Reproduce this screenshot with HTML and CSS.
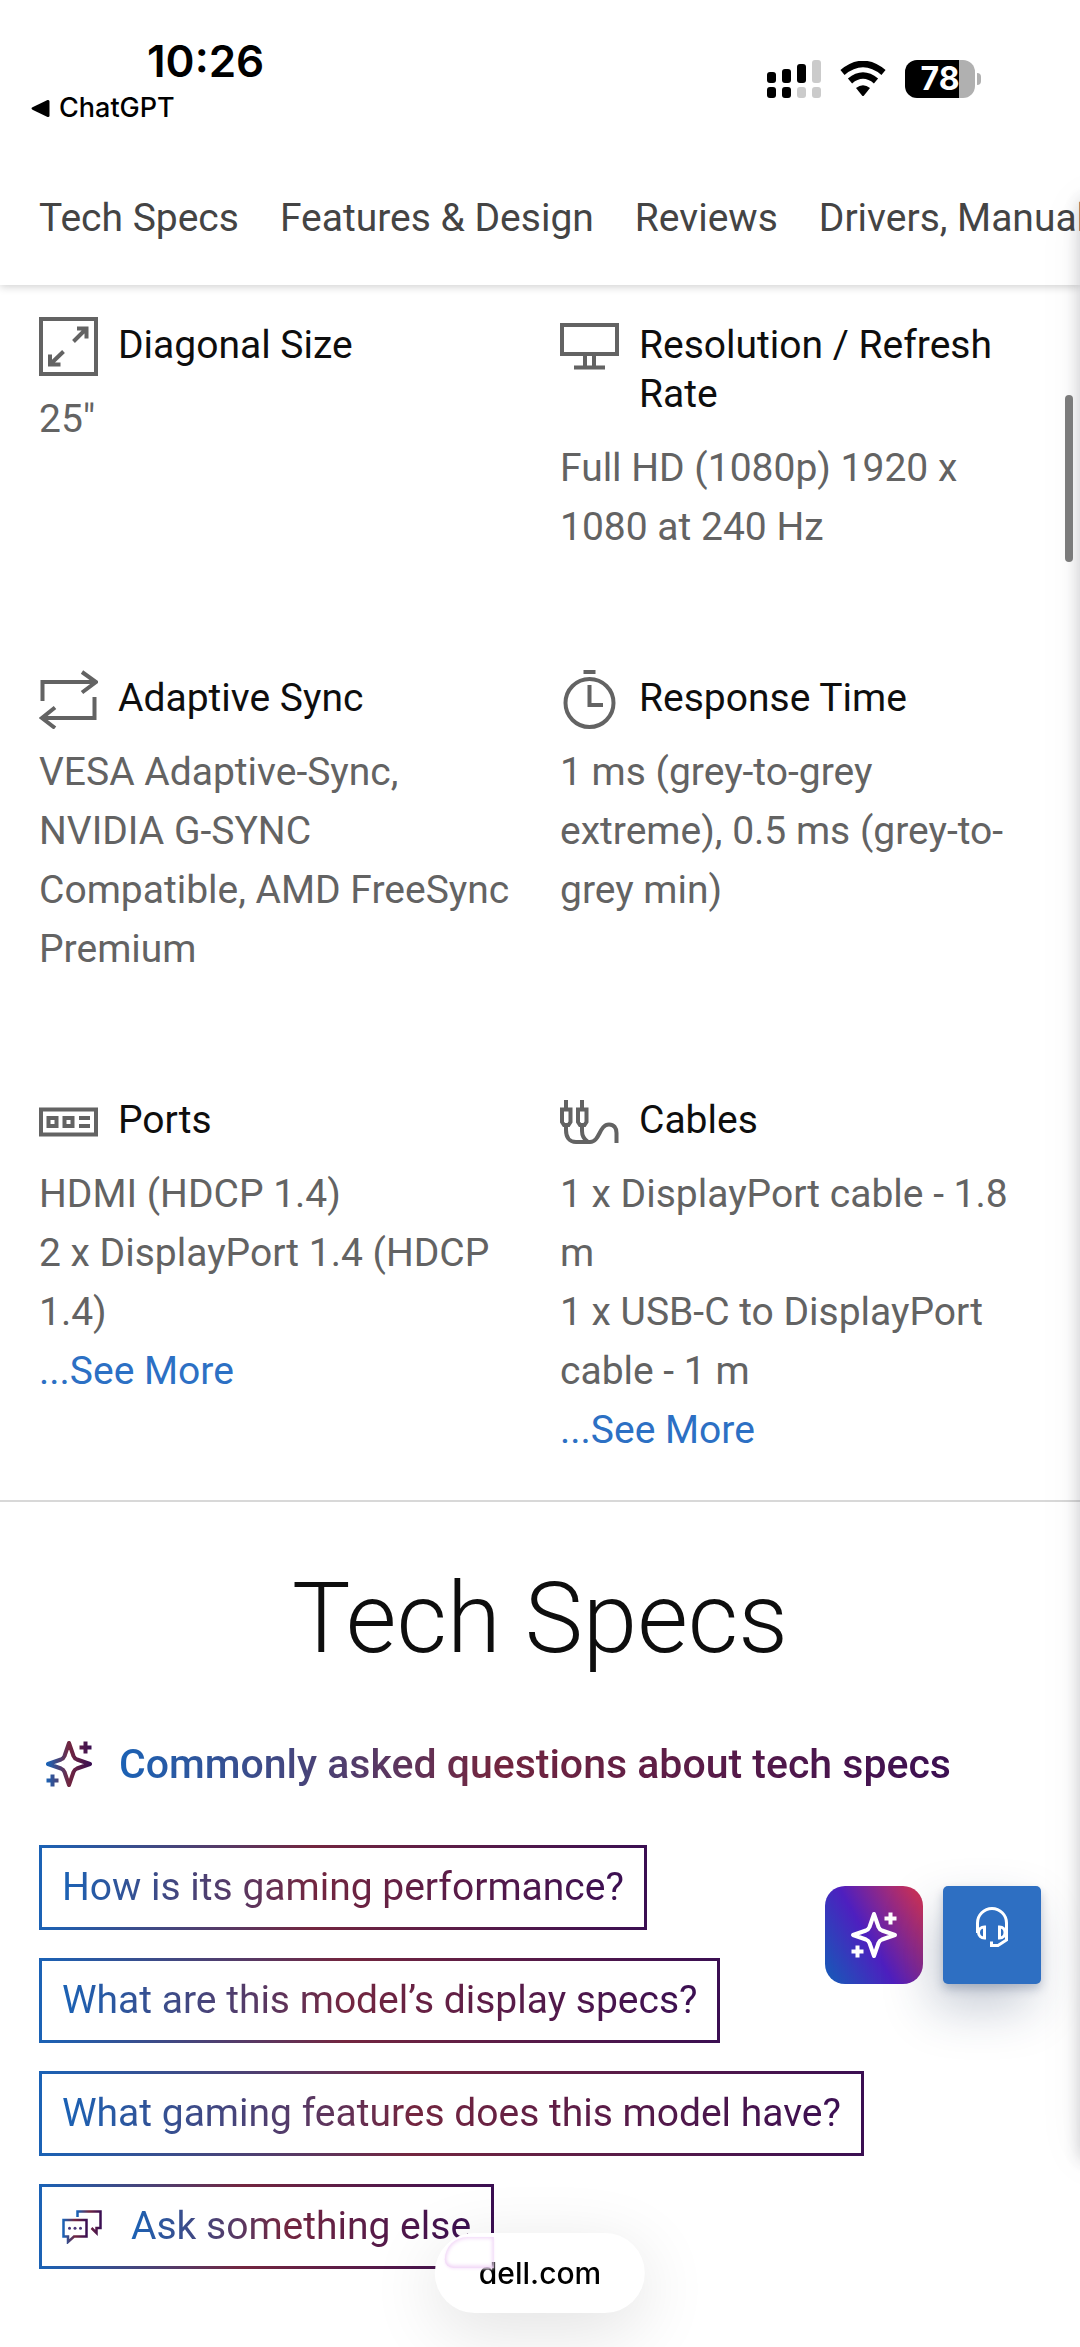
FILE: index.html
```html
<!DOCTYPE html>
<html lang="en">
<head>
    <meta charset="UTF-8">
    <meta name="viewport" content="width=device-width, initial-scale=1.0">
    <title>Tech Specs</title>
    <link rel="stylesheet" href="styles.css">
</head>
<body>
    <svg class="defs" aria-hidden="true">
        <defs>
            <linearGradient id="aiGradient" x1="0" y1="0" x2="1" y2="0">
                <stop offset="0" stop-color="#1b62b5"/>
                <stop offset="0.5" stop-color="#73263f"/>
                <stop offset="1" stop-color="#3b0f52"/>
            </linearGradient>
            <symbol id="sparkle" viewBox="0 0 60 60">
                <path d="M30 9L34.5 22Q35.5 24.500 38 25.500L51 30L38 34.500Q35.500 35.500 34.500 38L30 51L25.500 38Q24.500 35.500 22 34.500L9 30L22 25.500Q24.500 24.500 25.500 22Z"/>
                <path d="M46.500 7.500v12M40.500 13.500h12M13.500 40.500v12M7.500 46.500h12"/>
            </symbol>
        </defs>
    </svg>

    <header class="status-bar">
        <div class="status-left">
            <time class="clock">10:26</time>
            <a href="#" class="back-link">
                <svg width="19" height="19" viewBox="0 0 19 19"><path d="M1.500 8.300L16.500 1Q18.500 0.500 18.500 2.500V16.500Q18.500 18.500 16.500 18L1.500 10.700Q-0.500 9.500 1.500 8.300Z"/></svg>
                ChatGPT
            </a>
        </div>
        <div class="status-right">
            <svg width="54" height="38" viewBox="0 0 54 38">
                <rect x="0" y="12" width="9" height="11" rx="3"/>
                <rect x="15" y="9" width="9" height="14" rx="3"/>
                <rect x="30" y="4" width="9" height="19" rx="3"/>
                <rect x="45" y="0" width="9" height="23" rx="3" fill="#cbcbcb"/>
                <rect x="0" y="27" width="9" height="11" rx="3"/>
                <rect x="15" y="27" width="9" height="11" rx="3"/>
                <rect x="30" y="27" width="9" height="11" rx="3" fill="#cbcbcb"/>
                <rect x="45" y="27" width="9" height="11" rx="3" fill="#cbcbcb"/>
            </svg>
            <svg class="wifi" width="48" height="36" viewBox="0 0 48 36">
                <path d="M3.500 11.500Q24 -5.500 44.500 11.500" fill="none" stroke="#000" stroke-width="6.500"/>
                <path d="M11 20Q24 9 37 20" fill="none" stroke="#000" stroke-width="6.500"/>
                <path d="M17 27Q24 21.500 31 27L25 34.500Q24 35.500 23 34.500Z"/>
            </svg>
            <div class="battery">
                <span class="battery-level">78</span>
                <span class="battery-cap"></span>
            </div>
        </div>
    </header>

    <nav class="page-nav">
        <a href="#">Tech Specs</a>
        <a href="#">Features &amp; Design</a>
        <a href="#">Reviews</a>
        <a href="#">Drivers, Manuals &amp; Support</a>
    </nav>

    <main>
        <section class="spec-grid">
            <article>
                <h3>
                    <svg class="spec-icon" viewBox="0 0 59 59">
                        <rect x="2" y="2" width="55" height="55"/>
                        <path d="M38 11.500H47.500V21.500M47 12L34.500 24.500M11 37.500V47.500H21.500M11.500 47L24.500 34.500"/>
                    </svg>
                    Diagonal Size
                </h3>
                <p>25"</p>
            </article>
            <article>
                <h3>
                    <svg class="spec-icon" viewBox="0 0 59 59">
                        <rect x="2" y="8" width="55" height="29"/>
                        <path d="M25 38V50M34 38V50M14 50.500H45"/>
                    </svg>
                    Resolution / Refresh Rate
                </h3>
                <p>Full HD (1080p) 1920 x 1080 at 240 Hz</p>
            </article>
            <article>
                <h3>
                    <svg class="spec-icon" viewBox="0 0 59 59">
                        <path d="M3.500 31V12H57M43 2L57 12L43 22.500M55.500 27V48H3M16 37.500L3 48L16 58"/>
                    </svg>
                    Adaptive Sync
                </h3>
                <p>VESA Adaptive-Sync, NVIDIA G-SYNC Compatible, AMD FreeSync Premium</p>
            </article>
            <article>
                <h3>
                    <svg class="spec-icon" viewBox="0 0 59 59">
                        <circle cx="29.500" cy="33" r="24"/>
                        <path d="M23.500 2H35.500M29.500 15V35H43"/>
                    </svg>
                    Response Time
                </h3>
                <p>1 ms (grey-to-grey extreme), 0.5 ms (grey-to-grey min)</p>
            </article>
            <article>
                <h3>
                    <svg class="spec-icon" viewBox="0 0 59 59">
                        <rect x="2" y="17.500" width="55" height="25"/>
                        <rect x="9.500" y="26" width="8" height="8"/>
                        <rect x="25.500" y="26" width="8" height="8"/>
                        <path d="M40 26H51M40 34H51"/>
                    </svg>
                    Ports
                </h3>
                <p>HDMI (HDCP 1.4)<br>2 x DisplayPort 1.4 (HDCP 1.4)</p>
                <a href="#">...See More</a>
            </article>
            <article>
                <h3>
                    <svg class="spec-icon" viewBox="0 0 59 59">
                        <path d="M6 8V16M22 8V16M2 17.500H10.500V30L8.500 33H4L2 30ZM18 17.500H26.500V30L24.500 33H20L18 30Z"/>
                        <path d="M6 33V38C6 45 9 50 16 50H30C40 50 39 32.500 49 32.500C54 32.500 56.500 36 56.500 41V51M22 33V39Q22 46 28 50"/>
                    </svg>
                    Cables
                </h3>
                <p>1 x DisplayPort cable - 1.8 m<br>1 x USB-C to DisplayPort cable - 1 m</p>
                <a href="#">...See More</a>
            </article>
        </section>

        <section class="tech-specs">
            <h1>Tech Specs</h1>
            <h2>
                <svg class="ai-icon" stroke="url(#aiGradient)"><use href="#sparkle"/></svg>
                <span class="ai-text">Commonly asked questions about tech specs</span>
            </h2>
            <div class="questions">
                <button type="button"><span class="ai-text">How is its gaming performance?</span></button>
                <button type="button"><span class="ai-text">What are this model’s display specs?</span></button>
                <button type="button"><span class="ai-text">What gaming features does this model have?</span></button>
                <button type="button">
                    <svg class="ask-icon" viewBox="0 0 41 34">
                        <g fill="none" stroke="url(#aiGradient)" stroke-width="2.500">
                            <path d="M15.500 7V1.500H38.500V18H34.500V23L29.500 18"/>
                            <path d="M1.500 10H24.500V26.500H12L6 32V26.500H1.500Z"/>
                        </g>
                        <g fill="#4a3678">
                            <circle cx="7.500" cy="18.300" r="1.500"/>
                            <circle cx="13" cy="18.300" r="1.500"/>
                            <circle cx="18.500" cy="18.300" r="1.500"/>
                        </g>
                    </svg>
                    <span class="ai-text">Ask something else</span>
                </button>
            </div>
        </section>
    </main>

    <div class="floating-buttons">
        <button type="button" class="ai-button" aria-label="AI assistant">
            <svg class="ai-icon"><use href="#sparkle"/></svg>
        </button>
        <button type="button" class="support-button" aria-label="Support">
            <svg width="32" height="41" viewBox="0 0 32 41">
                <path d="M1.500 26V16A14.500 14.500 0 0 1 30.500 16V33L22 38.500H15.500V34.500"/>
                <path d="M8.500 20V31C5 31 2.500 28.500 2.500 25.500S5 20 8.500 20ZM23.500 20V31C27 31 29 28.500 29 25.500S27 20 23.500 20Z"/>
            </svg>
        </button>
    </div>

    <div class="drawer-edge"></div>
    <div class="scroll-thumb"></div>

    <a href="#" class="address-pill">dell.com</a>
</body>
</html>
```
FILE: styles.css
```css
* {
    box-sizing: border-box;
    margin: 0;
    padding: 0;
}

body {
    background-color: #fff;
    font-family: Roboto, sans-serif;
    font-size: 39px;
    line-height: 59px;
    color: #636363;
}

a {
    color: #2c70c4;
    text-decoration: none;
}

button {
    font: inherit;
    cursor: pointer;
}

.defs {
    position: absolute;
    width: 0;
    height: 0;
}

/* Status bar */
.status-bar {
    display: flex;
    justify-content: space-between;
    align-items: center;
    padding: 34px 99px 0 31px;
    margin-bottom: 24px;
    font-family: Inter, sans-serif;
    color: #000;
}

.clock {
    display: block;
    margin-left: 116px;
    font-size: 44px;
    font-weight: 600;
    line-height: 54px;
}

.back-link {
    display: flex;
    align-items: center;
    gap: 9px;
    font-size: 27px;
    font-weight: 500;
    line-height: 40px;
    color: #000;
}

.status-right {
    display: flex;
    align-items: center;
    gap: 18px;
    padding-bottom: 4px;
}

.battery {
    position: relative;
    display: flex;
    justify-content: center;
    align-items: center;
    width: 70px;
    height: 38px;
    margin-right: 6px;
    border-radius: 12px;
    background: linear-gradient(to right, #000 54px, #b0b0b0 54px);
}

.battery-level {
    font-size: 32px;
    font-weight: 700;
    line-height: 38px;
    color: #fff;
}

.battery-cap {
    position: absolute;
    top: 13px;
    right: -6px;
    width: 4px;
    height: 12px;
    border-radius: 0 6px 6px 0;
    background-color: #b0b0b0;
}

/* Section links */
.page-nav {
    display: flex;
    gap: 41px;
    padding: 42px 39px;
    line-height: 49px;
    white-space: nowrap;
    overflow-x: auto;
    scrollbar-width: none;
    box-shadow: 0 2px 8px rgba(0, 0, 0, 0.18);
    /* shadow only below the bar */
    clip-path: inset(0 0 -16px);
}

.page-nav a {
    flex: none;
    color: #444;
}

/* Key specs */
.spec-grid {
    display: grid;
    grid-template-columns: 1fr 1fr;
    gap: 117px 40px;
    padding: 36px 39px 40px;
    border-bottom: 2px solid #d8d8d8;
}

.spec-grid h3 {
    display: flex;
    align-items: flex-start;
    gap: 20px;
    margin-bottom: 20px;
    font-size: 39px;
    font-weight: 400;
    line-height: 49px;
    color: #0e0e0e;
}

.spec-icon {
    flex: none;
    width: 59px;
    height: 59px;
    margin: -4px 0 -6px;
    fill: none;
    stroke: #636363;
    stroke-width: 4;
}

/* Tech specs and suggested questions */
.tech-specs {
    padding: 58px 39px 78px;
}

h1 {
    margin-bottom: 56px;
    font-size: 98px;
    font-weight: 300;
    line-height: 118px;
    text-align: center;
    color: #0e0e0e;
}

h2 {
    display: flex;
    align-items: center;
    gap: 20px;
    margin-bottom: 51px;
    font-size: 41px;
    font-weight: 500;
}

.ai-icon {
    flex: none;
    width: 60px;
    height: 60px;
    fill: none;
    stroke-width: 4;
    stroke-linejoin: round;
}

.ai-text {
    background: linear-gradient(to right, #1b62b5, #73263f 45%, #3b0f52);
    -webkit-background-clip: text;
    background-clip: text;
    color: transparent;
}

.questions {
    display: flex;
    flex-direction: column;
    align-items: flex-start;
    gap: 28px;
}

.questions button {
    display: flex;
    align-items: center;
    gap: 28px;
    padding: 10px 20px;
    border: 3px solid;
    border-image: linear-gradient(to right, #1b62b5, #73263f 45%, #3b0f52) 1;
    background: none;
}

.ask-icon {
    width: 41px;
    height: 34px;
}

/* Things floating over the page */
.floating-buttons {
    position: fixed;
    right: 39px;
    bottom: 363px;
    display: flex;
    gap: 20px;
}

.floating-buttons button {
    display: flex;
    justify-content: center;
    align-items: center;
    width: 98px;
    height: 98px;
    border: none;
    fill: none;
    stroke: #fff;
}

.ai-button {
    border-radius: 20px;
    background: linear-gradient(60deg, #1a56b8 5%, #4e1fbf 45%, #c4305c 92%);
}

.support-button {
    padding-bottom: 15px;
    border-radius: 5px;
    background-color: #2e6fc2;
    stroke-width: 3;
    box-shadow: 0 5px 10px rgba(30, 50, 90, 0.25), -10px 24px 50px rgba(30, 50, 90, 0.25);
}

.drawer-edge {
    position: fixed;
    top: 200px;
    left: 100%;
    bottom: 187px;
    width: 40px;
    box-shadow: 0 0 18px rgba(40, 40, 60, 0.24), 0 0 50px rgba(40, 40, 60, 0.05);
}

.scroll-thumb {
    position: fixed;
    top: 395px;
    right: 7px;
    width: 8px;
    height: 167px;
    border-radius: 4px;
    background-color: #7b7b7b;
}

.address-pill {
    position: fixed;
    bottom: 34px;
    left: 50%;
    transform: translateX(-50%);
    padding: 20px 44px;
    border-radius: 40px;
    background-color: #fff;
    box-shadow: 0 16px 70px rgba(0, 0, 0, 0.12);
    font-family: Inter, sans-serif;
    font-size: 30px;
    font-weight: 500;
    line-height: 40px;
    color: #000;
}

/* Edge of the button behind, bent by the glass */
.address-pill::before {
    content: "";
    position: absolute;
    top: 4px;
    left: 10px;
    width: 49px;
    height: 31px;
    border-radius: 32px 0 0 12px;
    box-shadow: inset 1px 1px 4px #f0d4f6, inset -1px -2px 4px #f0d4f6, 0 1px 3px #f8e8fb;
}
```
